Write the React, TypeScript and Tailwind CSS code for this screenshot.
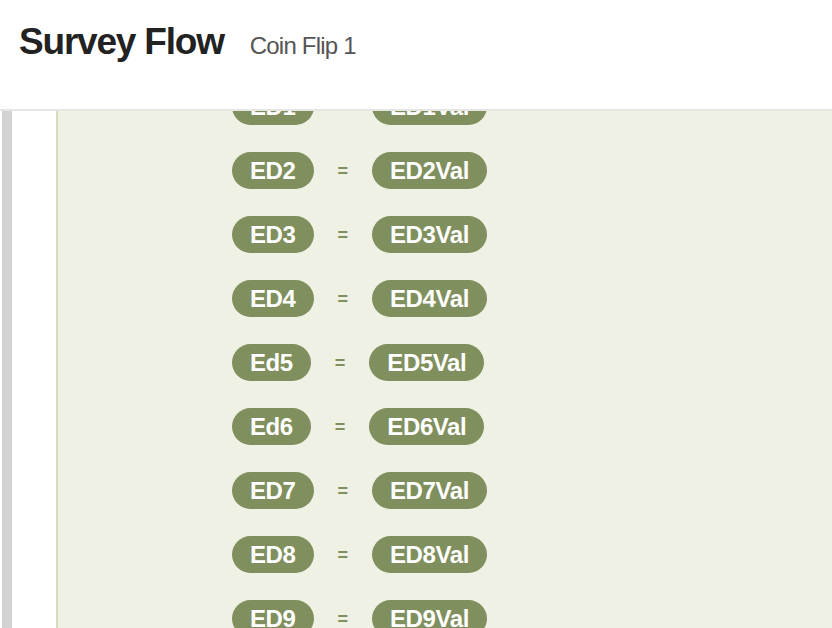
const rows: [string, string][] = [
  ['ED1', 'ED1Val'],
  ['ED2', 'ED2Val'],
  ['ED3', 'ED3Val'],
  ['ED4', 'ED4Val'],
  ['Ed5', 'ED5Val'],
  ['Ed6', 'ED6Val'],
  ['ED7', 'ED7Val'],
  ['ED8', 'ED8Val'],
  ['ED9', 'ED9Val'],
]

function Pill({ label }: { label: string }) {
  return (
    <span className="inline-flex h-[37px] items-center rounded-full bg-[#7f8f5d] px-[18px] text-[24px] font-bold leading-none tracking-[-0.4px] text-white">
      {label}
    </span>
  )
}

export default function App() {
  return (
    <div className="flex h-[628px] w-[832px] flex-col overflow-hidden bg-white font-['Liberation_Sans',Arial,sans-serif]">
      {/* Header */}
      <div className="flex h-[111px] shrink-0 items-baseline gap-[26px] border-b-2 border-[#e6e6e6] px-[19px] pt-[23px]">
        <h1 className="text-[37px] font-bold leading-none tracking-[-1.2px] text-[#222]">Survey Flow</h1>
        <span className="text-[24px] leading-none tracking-[-0.8px] text-[#555]">Coin Flip 1</span>
      </div>

      {/* Flow body */}
      <div className="flex min-h-0 flex-1">
        <div className="ml-[2px] w-[10px] shrink-0 bg-[#d3d3d3]" />
        <div className="w-[44px] shrink-0 bg-white" />
        <div className="w-[2px] shrink-0 bg-[#d5ddc0]" />
        <div className="flex-1 overflow-hidden bg-[#eef1e3]">
          <div className="-mt-[23px] flex flex-col gap-[27px] pl-[174px]">
            {rows.map(([k, v]) => (
              <div key={k} className="flex items-center gap-[24px]">
                <Pill label={k} />
                <span className="text-[18px] font-bold leading-none text-[#7f8f5d]">=</span>
                <Pill label={v} />
              </div>
            ))}
          </div>
        </div>
      </div>
    </div>
  )
}
